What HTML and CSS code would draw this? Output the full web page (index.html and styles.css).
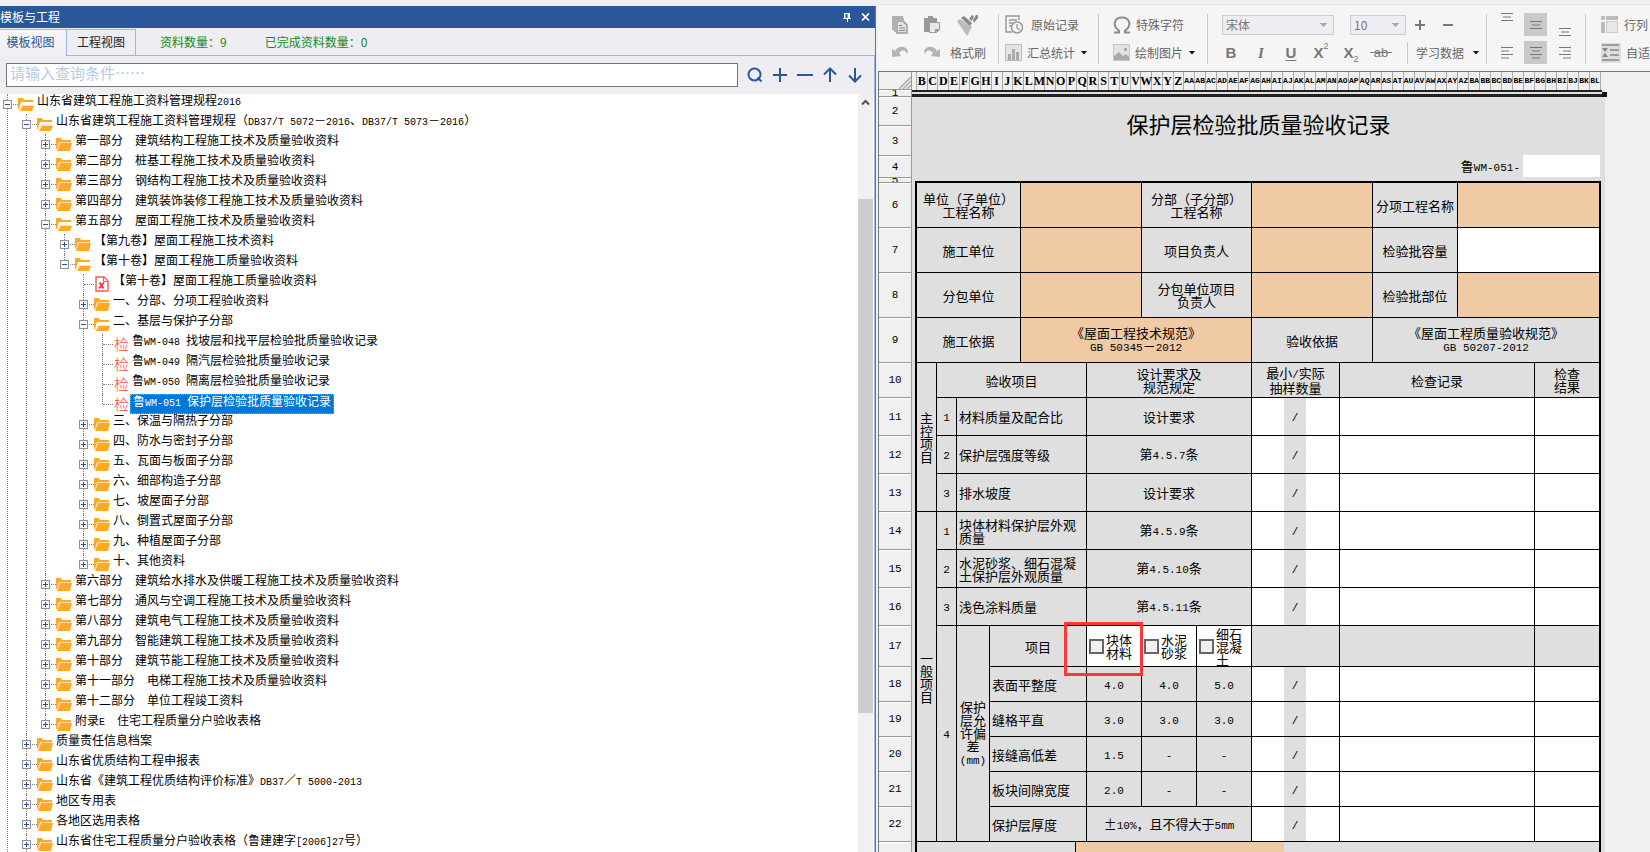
FILE: index.html
```
<!DOCTYPE html>
<html lang="zh-CN">
<head>
<meta charset="utf-8">
<title>模板与工程</title>
<link rel="stylesheet" href="styles.css">
</head>
<body>
<svg class="defs" aria-hidden="true">
  <symbol id="closed" viewBox="0 0 16 13"><path fill="#ffa929" d="M0 0h5l1 2h9v3H3L1 11H0z"/><path fill="#ffdfae" d="M3 4h12v1H3l-1 6H1z"/><path fill="#ffa929" d="M4 5h12l-2 8H1z"/></symbol>
  <symbol id="open" viewBox="0 0 16 13"><path fill="#ffa929" d="M0 0h5l1 2h9v2H3L1 11H0z"/><path fill="#ffdfae" d="M4 7h11v1H5l-3 5H1z"/><path fill="#ffa929" d="M5 8h11l-2 5H2z"/></symbol>
  <symbol id="xls" viewBox="0 0 14 16"><path fill="#fff" stroke="#f55" stroke-width="1.4" d="M1 1h8l4 4v10H1z"/><path fill="none" stroke="#f55" d="M8.500 1v4.500H13"/><path stroke="#e33" stroke-width="1.800" d="M4.500 6.500l4 6M9 6.500l-5 6"/></symbol>
  <symbol id="arrow" viewBox="0 0 6 4"><path fill="#111" d="M0 0h6L3 3.500z"/></symbol>
</svg>
<div class="app">
<aside class="panel">
  <header class="titlebar">
    <span>模板与工程</span>
    <span class="winbtns">
      <button aria-label="固定"><svg width="8" height="9"><path fill="#fff" d="M1 0h6v5h1v1H5v3H4V6H0V5h1z"/><path fill="#2b579a" d="M2.500 1h2v4h-2z"/></svg></button>
      <button aria-label="关闭"><svg width="9" height="8"><path stroke="#fff" stroke-width="1.700" d="M1 .5l7 7M8 .5l-7 7"/></svg></button>
    </span>
  </header>
  <div class="tabs">
    <button class="tab on">模板视图</button><button class="tab">工程视图</button>
    <div class="counts"><span>资料数量：<span class="c">9</span></span><span>已完成资料数量：<span class="c">0</span></span></div>
  </div>
  <div class="body">
    <div class="search">
      <input type="text" aria-label="查询条件" placeholder="请输入查询条件……">
      <button aria-label="查询"><svg width="16" height="16"><circle cx="7.500" cy="7.500" r="6"/><path d="M10.500 10.500l4 4"/></svg></button>
      <button aria-label="展开"><svg width="16" height="16"><path d="M8 1v14M1 8h14"/></svg></button>
      <button aria-label="收起"><svg width="16" height="16"><path d="M0 8h16"/></svg></button>
      <button aria-label="上一个"><svg width="16" height="16"><path d="M8 15V2M2 7.500L8 1.500l6 6"/></svg></button>
      <button aria-label="下一个"><svg width="16" height="16"><path d="M8 1v13M2 8.500l6 6 6-6"/></svg></button>
    </div>
    <div class="treewrap">
    <ul class="tree">
      <li class="more"><div class="row"><button class="ex" aria-label="收起"></button><svg class="ic"><use href="#open"/></svg><span>山东省建筑工程施工资料管理规程<i>2016</i></span></div>
      <ul>
        <li><div class="row"><button class="ex" aria-label="收起"></button><svg class="ic"><use href="#open"/></svg><span>山东省建筑工程施工资料管理规程（<i>DB37/T 5072</i>－<i>2016</i>、<i>DB37/T 5073</i>－<i>2016</i>）</span></div>
        <ul>
          <li><div class="row"><button class="ex p" aria-label="展开"></button><svg class="ic"><use href="#closed"/></svg><span>第一部分　建筑结构工程施工技术及质量验收资料</span></div></li>
          <li><div class="row"><button class="ex p" aria-label="展开"></button><svg class="ic"><use href="#closed"/></svg><span>第二部分　桩基工程施工技术及质量验收资料</span></div></li>
          <li><div class="row"><button class="ex p" aria-label="展开"></button><svg class="ic"><use href="#closed"/></svg><span>第三部分　钢结构工程施工技术及质量验收资料</span></div></li>
          <li><div class="row"><button class="ex p" aria-label="展开"></button><svg class="ic"><use href="#closed"/></svg><span>第四部分　建筑装饰装修工程施工技术及质量验收资料</span></div></li>
          <li><div class="row"><button class="ex" aria-label="收起"></button><svg class="ic"><use href="#open"/></svg><span>第五部分　屋面工程施工技术及质量验收资料</span></div>
          <ul>
            <li><div class="row"><button class="ex p" aria-label="展开"></button><svg class="ic"><use href="#closed"/></svg><span>【第九卷】屋面工程施工技术资料</span></div></li>
            <li><div class="row"><button class="ex" aria-label="收起"></button><svg class="ic"><use href="#open"/></svg><span>【第十卷】屋面工程施工质量验收资料</span></div>
            <ul>
              <li><div class="row leaf"><svg class="ic doc"><use href="#xls"/></svg><span>【第十卷】屋面工程施工质量验收资料</span></div></li>
              <li><div class="row"><button class="ex p" aria-label="展开"></button><svg class="ic"><use href="#closed"/></svg><span>一、分部、分项工程验收资料</span></div></li>
              <li><div class="row"><button class="ex" aria-label="收起"></button><svg class="ic"><use href="#open"/></svg><span>二、基层与保护子分部</span></div>
              <ul>
                <li><div class="row leaf"><b>检</b><span>鲁<i>WM-048 </i>找坡层和找平层检验批质量验收记录</span></div></li>
                <li><div class="row leaf"><b>检</b><span>鲁<i>WM-049 </i>隔汽层检验批质量验收记录</span></div></li>
                <li><div class="row leaf"><b>检</b><span>鲁<i>WM-050 </i>隔离层检验批质量验收记录</span></div></li>
                <li><div class="row leaf sel"><b>检</b><span>鲁<i>WM-051 </i>保护层检验批质量验收记录</span></div></li>
              </ul></li>
              <li><div class="row"><button class="ex p" aria-label="展开"></button><svg class="ic"><use href="#closed"/></svg><span>三、保温与隔热子分部</span></div></li>
              <li><div class="row"><button class="ex p" aria-label="展开"></button><svg class="ic"><use href="#closed"/></svg><span>四、防水与密封子分部</span></div></li>
              <li><div class="row"><button class="ex p" aria-label="展开"></button><svg class="ic"><use href="#closed"/></svg><span>五、瓦面与板面子分部</span></div></li>
              <li><div class="row"><button class="ex p" aria-label="展开"></button><svg class="ic"><use href="#closed"/></svg><span>六、细部构造子分部</span></div></li>
              <li><div class="row"><button class="ex p" aria-label="展开"></button><svg class="ic"><use href="#closed"/></svg><span>七、坡屋面子分部</span></div></li>
              <li><div class="row"><button class="ex p" aria-label="展开"></button><svg class="ic"><use href="#closed"/></svg><span>八、倒置式屋面子分部</span></div></li>
              <li><div class="row"><button class="ex p" aria-label="展开"></button><svg class="ic"><use href="#closed"/></svg><span>九、种植屋面子分部</span></div></li>
              <li><div class="row"><button class="ex p" aria-label="展开"></button><svg class="ic"><use href="#closed"/></svg><span>十、其他资料</span></div></li>
            </ul></li>
          </ul></li>
          <li><div class="row"><button class="ex p" aria-label="展开"></button><svg class="ic"><use href="#closed"/></svg><span>第六部分　建筑给水排水及供暖工程施工技术及质量验收资料</span></div></li>
          <li><div class="row"><button class="ex p" aria-label="展开"></button><svg class="ic"><use href="#closed"/></svg><span>第七部分　通风与空调工程施工技术及质量验收资料</span></div></li>
          <li><div class="row"><button class="ex p" aria-label="展开"></button><svg class="ic"><use href="#closed"/></svg><span>第八部分　建筑电气工程施工技术及质量验收资料</span></div></li>
          <li><div class="row"><button class="ex p" aria-label="展开"></button><svg class="ic"><use href="#closed"/></svg><span>第九部分　智能建筑工程施工技术及质量验收资料</span></div></li>
          <li><div class="row"><button class="ex p" aria-label="展开"></button><svg class="ic"><use href="#closed"/></svg><span>第十部分　建筑节能工程施工技术及质量验收资料</span></div></li>
          <li><div class="row"><button class="ex p" aria-label="展开"></button><svg class="ic"><use href="#closed"/></svg><span>第十一部分　电梯工程施工技术及质量验收资料</span></div></li>
          <li><div class="row"><button class="ex p" aria-label="展开"></button><svg class="ic"><use href="#closed"/></svg><span>第十二部分　单位工程竣工资料</span></div></li>
          <li><div class="row"><button class="ex p" aria-label="展开"></button><svg class="ic"><use href="#closed"/></svg><span>附录<i>E</i>　住宅工程质量分户验收表格</span></div></li>
        </ul></li>
        <li><div class="row"><button class="ex p" aria-label="展开"></button><svg class="ic"><use href="#closed"/></svg><span>质量责任信息档案</span></div></li>
        <li><div class="row"><button class="ex p" aria-label="展开"></button><svg class="ic"><use href="#closed"/></svg><span>山东省优质结构工程申报表</span></div></li>
        <li><div class="row"><button class="ex p" aria-label="展开"></button><svg class="ic"><use href="#closed"/></svg><span>山东省《建筑工程优质结构评价标准》<i>DB37</i>／<i>T 5000-2013</i></span></div></li>
        <li><div class="row"><button class="ex p" aria-label="展开"></button><svg class="ic"><use href="#closed"/></svg><span>地区专用表</span></div></li>
        <li><div class="row"><button class="ex p" aria-label="展开"></button><svg class="ic"><use href="#closed"/></svg><span>各地区选用表格</span></div></li>
        <li class="more"><div class="row"><button class="ex p" aria-label="展开"></button><svg class="ic"><use href="#closed"/></svg><span>山东省住宅工程质量分户验收表格（鲁建建字<i>[2006]27</i>号）</span></div></li>
      </ul></li>
    </ul>
    <div class="scroll"><svg width="9" height="7"><path fill="none" stroke="#505050" stroke-width="2" d="M1 5.500L4.500 2 8 5.500"/></svg><div class="thumb"></div></div>
    </div>
  </div>
</aside>
<main class="work">
  <div class="toolbar">
    <div class="grp g1">
      <button aria-label="复制"><svg width="16" height="18"><path fill="none" stroke="#999" stroke-width="1.500" d="M1 14V1h10M3 16V3h9"/><path fill="#e2e2e2" stroke="#999" stroke-width="1.500" d="M5 5h6l4 4v8H5z"/><path stroke="#888" d="M7 9.500h3M7 12h6M7 14.500h6"/></svg></button>
      <button aria-label="粘贴"><svg width="16" height="18"><path fill="#999" d="M0 2h4V0h5v2h4v4H6v10H0z"/><path fill="#e8e8e8" stroke="#999" d="M5.500 6.500h10v7l-3 3h-7z"/><path fill="#999" d="M11 17v-4h5z"/></svg></button>
      <button class="brush" aria-label="格式刷图标"><svg width="22" height="22"><path fill="#bcbcbc" d="M0 7l3-2 12 8-5 9z"/><path fill="#888" d="M4 4l3-2 8 7-2 3zM12 5l3-4 2 1-2 5zM16 6l3-5h2v3l-4 5z"/></svg></button>
      <button aria-label="撤销"><svg width="16" height="14"><path fill="#b4b4b4" d="M0 3l3 2c4-6 11-5 13 0l-1 3C13 3 9 4 7 7l2 3-9 1z"/></svg></button>
      <button aria-label="重做"><svg width="16" height="14"><path fill="#b4b4b4" d="M16 3l-3 2C9-1 2 0 0 5l1 3c2-5 6-4 8-1l-2 3 9 1z"/></svg></button>
      <button>格式刷</button>
    </div>
    <div class="grp g2">
      <button class="wide"><svg width="18" height="19"><path fill="none" stroke="#999" stroke-width="1.500" d="M7 17H1V1h13v4M4 5h8M4 8h4M4 11h2"/><circle cx="12" cy="12.500" r="5.500" fill="#f5f5f5" stroke="#999" stroke-width="1.500"/><path fill="none" stroke="#999" stroke-width="1.300" d="M12 9v4l3 2"/></svg>原始记录</button>
      <button><svg width="17" height="17"><path fill="#e4e4e4" stroke="#bbb" d="M.5.5h16v16H.5z"/><path fill="#aaa" d="M3 10h3v6H3zM7 5h3v11H7zM11 8h3v8h-3z"/></svg>汇总统计<svg class="dd"><use href="#arrow"/></svg></button>
    </div>
    <div class="grp g3">
      <button><svg width="18" height="18"><path fill="none" stroke="#8c8c8c" stroke-width="2" d="M1 16.500h5v-2C-1 10 1 1.500 9 1.500s10 8.500 3 13v2h5"/></svg>特殊字符</button>
      <button><svg width="17" height="17"><path fill="#e4e4e4" stroke="#c4c4c4" d="M.5.5h16v16H.5z"/><path fill="#aaa" d="M1 12l5-4 4 4 3-2 3 3v3H1zM11 4h3v3h-3z"/></svg>绘制图片<svg class="dd"><use href="#arrow"/></svg></button>
    </div>
    <div class="grp g4">
      <div class="line1">
        <select class="font" aria-label="字体"><option>宋体</option></select>
        <select class="size" aria-label="字号"><option>10</option></select>
        <button aria-label="增大"><svg width="10" height="10"><path stroke="#777" stroke-width="2" d="M5 0v10M0 5h10"/></svg></button>
        <button aria-label="减小"><svg width="10" height="10"><path stroke="#777" stroke-width="2" d="M0 5h10"/></svg></button>
      </div>
      <div class="line2">
        <button class="fb">B</button><button class="fi">I</button><button class="fu">U</button><button class="fb">X<sup>2</sup></button><button class="fb">X<sub>2</sub></button><button class="fs">&nbsp;ab&nbsp;</button>
        <button class="study">学习数据<svg class="dd"><use href="#arrow"/></svg></button>
      </div>
    </div>
    <div class="grp g5">
      <button aria-label="顶端对齐" class="t"><svg width="12" height="8"><path d="M0 .5h12M2 4h8M0 7.500h12"/></svg></button>
      <button aria-label="垂直居中" class="act"><svg width="12" height="8"><path d="M0 .5h12M2 4h8M0 7.500h12"/></svg></button>
      <button aria-label="底端对齐" class="b"><svg width="12" height="8"><path d="M0 .5h12M2 4h8M0 7.500h12"/></svg></button>
      <button aria-label="左对齐"><svg width="12" height="12"><path d="M0 .5h12M0 4h8M0 7.500h12M0 11h8"/></svg></button>
      <button aria-label="居中" class="act"><svg width="12" height="12"><path d="M0 .5h12M2 4h8M0 7.500h12M2 11h8"/></svg></button>
      <button aria-label="右对齐"><svg width="12" height="12"><path d="M0 .5h12M4 4h8M0 7.500h12M4 11h8"/></svg></button>
    </div>
    <div class="grp g6">
      <button><svg width="18" height="18"><path fill="#bbb" d="M0 0h4v4H0zM5 0h12v4H5zM0 6h4v11H0z"/><path fill="#e8e8e8" stroke="#bbb" stroke-dasharray="2 1" d="M5.500 5.500h11v11h-11z"/></svg>行列</button>
      <button><svg width="20" height="20"><path fill="#ddd" d="M0 0h20v20H0z"/><path stroke="#888" stroke-width="1.500" d="M1 2h17M9 7h9M9 12h9M1 17h17"/><path fill="#888" d="M1 5h6L4 9zM1 14h6l-3-4z"/></svg>自适应</button>
    </div>
  </div>
  <div class="sheet">
    <div class="colhead"><div class="corner"><svg width="12" height="12"><path stroke="#aaa" stroke-width="1.500" d="M0 12L12 0M4 12l8-8M8 12l4-4"/></svg></div>
      <div class="letters"><span>B</span><span>C</span><span>D</span><span>E</span><span>F</span><span>G</span><span>H</span><span>I</span><span>J</span><span>K</span><span>L</span><span>M</span><span>N</span><span>O</span><span>P</span><span>Q</span><span>R</span><span>S</span><span>T</span><span>U</span><span>V</span><span>W</span><span>X</span><span>Y</span><span>Z</span><span class="d">AA</span><span class="d">AB</span><span class="d">AC</span><span class="d">AD</span><span class="d">AE</span><span class="d">AF</span><span class="d">AG</span><span class="d">AH</span><span class="d">AI</span><span class="d">AJ</span><span class="d">AK</span><span class="d">AL</span><span class="d">AM</span><span class="d">AN</span><span class="d">AO</span><span class="d">AP</span><span class="d">AQ</span><span class="d">AR</span><span class="d">AS</span><span class="d">AT</span><span class="d">AU</span><span class="d">AV</span><span class="d">AW</span><span class="d">AX</span><span class="d">AY</span><span class="d">AZ</span><span class="d">BA</span><span class="d">BB</span><span class="d">BC</span><span class="d">BD</span><span class="d">BE</span><span class="d">BF</span><span class="d">BG</span><span class="d">BH</span><span class="d">BI</span><span class="d">BJ</span><span class="d">BK</span><span class="d">BL</span></div>
    </div>
    <div class="grid">
      <div class="rowhead">
        <span class="h7">1</span><span class="h29">2</span><span class="h30">3</span><span class="h22">4</span><span class="h5">5</span><span class="h45">6</span><span class="h45">7</span><span class="h45">8</span><span class="h45">9</span><span class="h35">10</span><span class="h38">11</span><span class="h38">12</span><span class="h38">13</span><span class="h38">14</span><span class="h38">15</span><span class="h38">16</span><span class="h41">17</span><span class="h35">18</span><span class="h35">19</span><span class="h35">20</span><span class="h35">21</span><span class="h35">22</span><span class="h35"></span>
      </div>
      <div class="paper">
        <div class="active"></div>
        <h1>保护层检验批质量验收记录</h1>
        <div class="docno"><label for="no">鲁<i>WM-051-</i></label><input id="no" type="text"></div>
        <table>
          <colgroup><col class="w20"><col class="w20"><col class="w33"><col class="w31"><col class="w55"><col class="w11"><col class="w55"><col class="w55"><col class="w55"><col class="w32"><col class="w22"><col class="w34"><col class="w33"><col class="w85"><col class="w77"><col class="w64"></colgroup>
          <tr class="h45"><td colspan="4">单位（子单位）<br>工程名称</td><td class="o" colspan="3"></td><td colspan="2">分部（子分部）<br>工程名称</td><td class="o" colspan="4"></td><td>分项工程名称</td><td class="o" colspan="2"></td></tr>
          <tr class="h45"><td colspan="4">施工单位</td><td class="o" colspan="3"></td><td colspan="2">项目负责人</td><td class="o" colspan="4"></td><td>检验批容量</td><td class="w" colspan="2"></td></tr>
          <tr class="h45"><td colspan="4">分包单位</td><td class="o" colspan="3"></td><td colspan="2">分包单位项目<br>负责人</td><td class="o" colspan="4"></td><td>检验批部位</td><td class="o" colspan="2"></td></tr>
          <tr class="h45"><td colspan="4">施工依据</td><td class="o" colspan="5">《屋面工程技术规范》<br><i>GB 50345</i>－<i>2012</i></td><td colspan="4">验收依据</td><td colspan="3">《屋面工程质量验收规范》<br><i>GB 50207-2012</i></td></tr>
          <tr class="h35"><td rowspan="4" class="v">主控项目</td><td colspan="5">验收项目</td><td colspan="3">设计要求及<br>规范规定</td><td colspan="3">最小<i>/</i>实际<br>抽样数量</td><td colspan="3">检查记录</td><td>检查<br>结果</td></tr>
          <tr class="h38"><td><i>1</i></td><td class="l" colspan="4">材料质量及配合比</td><td colspan="3">设计要求</td><td class="w nb"></td><td class="nb"><i>/</i></td><td class="w"></td><td class="w" colspan="3"></td><td class="w"></td></tr>
          <tr class="h38"><td><i>2</i></td><td class="l" colspan="4">保护层强度等级</td><td colspan="3">第<i>4.5.7</i>条</td><td class="w nb"></td><td class="nb"><i>/</i></td><td class="w"></td><td class="w" colspan="3"></td><td class="w"></td></tr>
          <tr class="h38"><td><i>3</i></td><td class="l" colspan="4">排水坡度</td><td colspan="3">设计要求</td><td class="w nb"></td><td class="nb"><i>/</i></td><td class="w"></td><td class="w" colspan="3"></td><td class="w"></td></tr>
          <tr class="h38"><td rowspan="9" class="v">一般项目</td><td><i>1</i></td><td class="l" colspan="4">块体材料保护层外观<br>质量</td><td colspan="3">第<i>4.5.9</i>条</td><td class="w nb"></td><td class="nb"><i>/</i></td><td class="w"></td><td class="w" colspan="3"></td><td class="w"></td></tr>
          <tr class="h38"><td><i>2</i></td><td class="l" colspan="4">水泥砂浆、细石混凝<br>土保护层外观质量</td><td colspan="3">第<i>4.5.10</i>条</td><td class="w nb"></td><td class="nb"><i>/</i></td><td class="w"></td><td class="w" colspan="3"></td><td class="w"></td></tr>
          <tr class="h38"><td><i>3</i></td><td class="l" colspan="4">浅色涂料质量</td><td colspan="3">第<i>4.5.11</i>条</td><td class="w nb"></td><td class="nb"><i>/</i></td><td class="w"></td><td class="w" colspan="3"></td><td class="w"></td></tr>
          <tr class="h41"><td rowspan="6"><i>4</i></td><td rowspan="6">保护<br>层允<br>许偏<br>差<br><i>(mm)</i></td><td colspan="3">项目</td><td class="w chk"><label><input type="checkbox"><span>块体<br>材料</span></label><span class="mark"></span></td><td class="w chk"><label><input type="checkbox"><span>水泥<br>砂浆</span></label></td><td class="w chk"><label><input type="checkbox"><span>细石<br>混凝<br>土</span></label></td><td colspan="3"></td><td colspan="3"></td><td></td></tr>
          <tr class="h35"><td class="l" colspan="3">表面平整度</td><td><i>4.0</i></td><td><i>4.0</i></td><td><i>5.0</i></td><td class="w nb"></td><td class="nb"><i>/</i></td><td class="w"></td><td class="w" colspan="3"></td><td class="w"></td></tr>
          <tr class="h35"><td class="l" colspan="3">缝格平直</td><td><i>3.0</i></td><td><i>3.0</i></td><td><i>3.0</i></td><td class="w nb"></td><td class="nb"><i>/</i></td><td class="w"></td><td class="w" colspan="3"></td><td class="w"></td></tr>
          <tr class="h35"><td class="l" colspan="3">接缝高低差</td><td><i>1.5</i></td><td><i>-</i></td><td><i>-</i></td><td class="w nb"></td><td class="nb"><i>/</i></td><td class="w"></td><td class="w" colspan="3"></td><td class="w"></td></tr>
          <tr class="h35"><td class="l" colspan="3">板块间隙宽度</td><td><i>2.0</i></td><td><i>-</i></td><td><i>-</i></td><td class="w nb"></td><td class="nb"><i>/</i></td><td class="w"></td><td class="w" colspan="3"></td><td class="w"></td></tr>
          <tr class="h35"><td class="l" colspan="3">保护层厚度</td><td colspan="3">±<i>10%</i>，且不得大于<i>5mm</i></td><td class="w nb"></td><td class="nb"><i>/</i></td><td class="w"></td><td class="w" colspan="3"></td><td class="w"></td></tr>
          <tr class="h35"><td colspan="5"></td><td class="o nb" colspan="5"></td><td colspan="6"></td></tr>
        </table>
      </div>
    </div>
  </div>
</main>
</div>
</body>
</html>
```
FILE: styles.css
```
* { box-sizing: border-box; }
html, body { height: 100%; margin: 0; }
body {
  background: #f0f0f0;
  color: #000;
  font: 12px/14px "Noto Sans CJK SC", sans-serif;
  overflow: hidden;
}
button, input, select { font: inherit; color: inherit; margin: 0; }
button { border: 0; padding: 0; background: none; display: flex; align-items: center; justify-content: center; white-space: nowrap; }
svg { flex: none; display: block; }
i { font: 10px "Liberation Mono", monospace; font-style: normal; white-space: pre; line-height: 1; }
.defs { position: absolute; width: 0; height: 0; }
.app {
  display: grid;
  grid-template-columns: minmax(0, 876fr) minmax(0, 772fr);
  grid-template-rows: minmax(0, 1fr);
  gap: 2px;
  height: 100vh;
}

/* Template panel */
.panel { margin-top: 6px; display: flex; flex-direction: column; min-height: 0; border-right: 1px solid #4a78c4; background: #eeedf2; }
.titlebar { background: #2b579a; color: #fff; height: 22px; display: flex; align-items: center; justify-content: space-between; padding-right: 5px; }
.winbtns { display: flex; gap: 10px; }
.tabs { display: flex; height: 28px; padding-top: 1px; }
.tab { width: 70px; padding-bottom: 2px; border: 1px solid #9ab7e6; color: #222; }
.tab.on { width: 66px; padding-right: 5px; border: 0; border-top: 1px solid #9ab7e6; color: #2b579a; background: linear-gradient(#f6f6f9, #eeedf2); }
.counts { flex: 1; display: flex; align-items: center; gap: 38px; padding-left: 24px; color: #168a16; border-bottom: 1px solid #9ab7e6; }
.body { flex: 1; min-height: 0; display: flex; flex-direction: column; border-right: 1px solid #9ab7e6; }
.search { display: flex; align-items: center; height: 38px; padding: 0 7px 1px 6px; }
.search input { flex: 1; min-width: 0; height: 24px; margin-right: 4px; padding: 0 3px 4px; border: 1px solid #767676; background: #fff; font-size: 15px; outline: 0; }
.search input::placeholder { color: #b4cbe9; opacity: 1; }
.search button { width: 25px; height: 24px; }
.search svg { fill: none; stroke: #2b579a; stroke-width: 2; }
.treewrap { flex: 1; min-height: 0; display: flex; background: #fff; overflow: hidden; }
.tree { flex: 1; }
.tree, .tree ul { list-style: none; margin: 0; padding: 0; }
.tree ul { padding-left: 19px; }
.tree li { position: relative; }
.tree li::before { content: ""; position: absolute; left: 7px; top: 0; bottom: 0; border-left: 1px dotted #808080; }
.tree li:last-child::before { bottom: auto; height: 10px; }
.tree li.more::before { bottom: 0; height: auto; }
.row { position: relative; display: flex; height: 20px; align-items: flex-start; white-space: nowrap; }
.row::before { content: ""; position: absolute; left: 8px; top: 10px; width: 10px; border-top: 1px dotted #808080; }
.ex { position: relative; width: 9px; height: 9px; margin: 6px 6px 0 3px; border: 1px solid #919191; background: linear-gradient(#2b579a, #2b579a) center / 5px 1px no-repeat, #f8f8f8; }
.ex.p { background: linear-gradient(#2b579a, #2b579a) center / 5px 1px no-repeat, linear-gradient(#2b579a, #2b579a) center / 1px 5px no-repeat, #f8f8f8; }
.ic { width: 16px; height: 13px; margin: 4px 3px 0 0; }
.leaf { padding-left: 18px; }
.ic.doc { width: 16px; height: 16px; margin-top: 2px; }
.row b { font-size: 15px; font-weight: 300; line-height: 18px; margin-top: 1px; width: 19px; padding-left: 1px; color: #f44; }
.row > span { padding: 0 1px 0 0; line-height: 11px; }
.sel > span { height: 20px; margin-left: -2px; padding: 0 2px; background: #0078d7; color: #fff; border: 1px dotted #ff8728; line-height: 11px; }
.scroll { width: 15px; margin-right: 1px; display: flex; flex-direction: column; align-items: center; background: #f0f0f0; padding-top: 5px; }
.thumb { width: 15px; height: 514px; margin-top: 93px; background: #cdcdcd; }

/* Toolbar */
.work { margin-top: 4px; display: flex; flex-direction: column; min-width: 0; min-height: 0; }
.toolbar { display: flex; height: 67px; padding: 9px 0 6px 6px; background: #f5f5f5; border-top: 1px solid #e2e1ea; color: #666; overflow: hidden; }
.grp { flex: none; display: grid; grid-template-rows: 21px 21px; row-gap: 7px; height: 50px; border-right: 1px solid #c8c8c8; }
.g1 { width: 115px; grid-template-columns: 32px 32px 40px; }
.g2, .g3 { justify-items: start; }
.g2 { width: 100px; padding-left: 6px; }
.g3 { width: 109px; padding-left: 14px; }
.g2 button, .g3 button, .g6 button { gap: 5px; }
.g2 button.wide { gap: 8px; }
.dd { width: 6px; height: 4px; margin-left: 1px; }
.g4 { width: 279px; padding-left: 8px; }
.line1, .line2 { display: flex; align-items: center; }
.line1 { padding-left: 6px; }
.line1 button { width: 28px; height: 20px; }
select { appearance: none; height: 20px; padding: 0 3px; border: 1px solid #ccc9dc; border-radius: 0; color: #777; background: linear-gradient(135deg, #aaa 50%, transparent 50%) right 5px center / 4px 4px no-repeat, linear-gradient(225deg, #aaa 50%, transparent 50%) right 9px center / 4px 4px no-repeat, #eeedf2; }
.font { width: 112px; margin-right: 16px; }
.size { width: 56px; }
.line2 button { width: 30px; font-size: 15px; color: #777; height: 22px; }
.line2 .fb, .line2 .fu { font-family: "Liberation Sans", sans-serif; font-weight: 700; }
.fu { text-decoration: underline; text-underline-offset: 2px; }
.line2 .fi { font-family: "Liberation Serif", serif; font-style: italic; font-weight: 700; }
.line2 .fs { font-family: "Liberation Sans", sans-serif; font-size: 13px; text-decoration: line-through; }
.line2 sup, .line2 sub { font-size: 9px; font-weight: 400; line-height: 9px; }
.line2 sup { align-self: flex-start; }
.line2 sub { align-self: flex-end; }
.line2 .study { width: 80px; margin-left: 11px; border-left: 1px solid #c8c8c8; font-size: 12px; color: #666; gap: 8px; }
.g5 { width: 99px; padding-left: 5px; grid-template-columns: 29px 29px 29px; justify-items: center; align-items: center; }
.g5 button { width: 23px; height: 23px; }
.g5 svg { stroke: #777; }
.g5 .act { background: #c9c9c9; }
.g5 .t { align-items: flex-start; }
.g5 .b { align-items: flex-end; }
.g6 { padding-left: 15px; justify-items: start; border-right: 0; }

/* Spreadsheet */
.sheet { flex: 1; min-height: 0; display: flex; flex-direction: column; border-top: 1px solid #777; border-left: 1px solid #777; overflow: hidden; }
.colhead { display: flex; flex: none; height: 18px; }
.corner { flex: none; width: 33px; display: flex; align-items: flex-end; justify-content: flex-end; border-right: 1px solid #999; border-bottom: 1px solid #999; }
.letters { flex: none; display: grid; grid-template-columns: repeat(25, minmax(0, 267fr)) repeat(38, minmax(0, 274fr)); width: 685px; margin-left: 4px; border-left: 1px solid #aaa; }
.letters span { display: flex; justify-content: center; align-items: center; border-right: 1px solid #aaa; font: 700 12px/16px "Liberation Serif", serif; }
.letters .d { font: 700 8px/16px "Liberation Mono", monospace; }
.grid { display: flex; }
.rowhead { flex: none; width: 33px; border-right: 1px solid #999; }
.rowhead span { display: flex; align-items: center; justify-content: center; overflow: hidden; border-bottom: 1px solid #999; box-shadow: inset 0 1px #fff; font: 11px/12px "Liberation Mono", monospace; }
.paper { flex: none; width: 693px; background: #dfdfdf; }
.active { position: relative; width: 690px; height: 7px; border: solid #222; border-width: 2px 0 3px; }
.active::after { content: ""; position: absolute; right: -5px; bottom: -3px; width: 5px; height: 5px; background: #111; }
h1 { margin: 0; padding-bottom: 6px; height: 58px; display: flex; align-items: center; justify-content: center; font-size: 22px; line-height: 26px; font-weight: 400; }
.docno { display: flex; justify-content: flex-end; align-items: center; gap: 3px; height: 22px; margin-bottom: 4px; padding-right: 5px; font-size: 13px; }
.docno input { width: 77px; height: 22px; border: 0; background: #fff; }
.docno i, td i { font-size: 11px; }
table { width: 686px; margin-left: 3px; table-layout: fixed; border: 2px solid #000; border-collapse: separate; border-spacing: 0; font-size: 13px; line-height: 13px; }
td { padding: 0; text-align: center; vertical-align: middle; border-right: 1px solid #000; border-bottom: 1px solid #000; white-space: nowrap; }
tr > td:last-child { border-right: 0; }
.o { background: #f0c9a5; }
.w { background: #fff; }
td.nb { border-right: 0; }
td.l { text-align: left; padding-left: 2px; }
td.v { white-space: normal; padding: 0 3px; }
.chk { position: relative; }
.chk label { display: flex; align-items: center; gap: 2px; padding-left: 2px; text-align: left; }
.chk input { appearance: none; flex: none; width: 15px; height: 15px; border: 2px solid #666; background: #f0f0f0; }
.mark { position: absolute; z-index: 1; left: -23px; top: -4px; width: 79px; height: 54px; border: 3px solid #fb3838; }
.h5 { height: 5px; } .h7 { height: 7px; } .h22 { height: 22px; } .h29 { height: 29px; } .h30 { height: 30px; }
.h35 { height: 35px; } .h38 { height: 38px; } .h41 { height: 41px; } .h45 { height: 45px; }
.w11 { width: 11px; } .w20 { width: 20px; } .w22 { width: 22px; } .w31 { width: 31px; } .w32 { width: 32px; } .w33 { width: 33px; } .w34 { width: 34px; }
.w55 { width: 55px; } .w64 { width: 64px; } .w77 { width: 77px; } .w85 { width: 85px; }
```
